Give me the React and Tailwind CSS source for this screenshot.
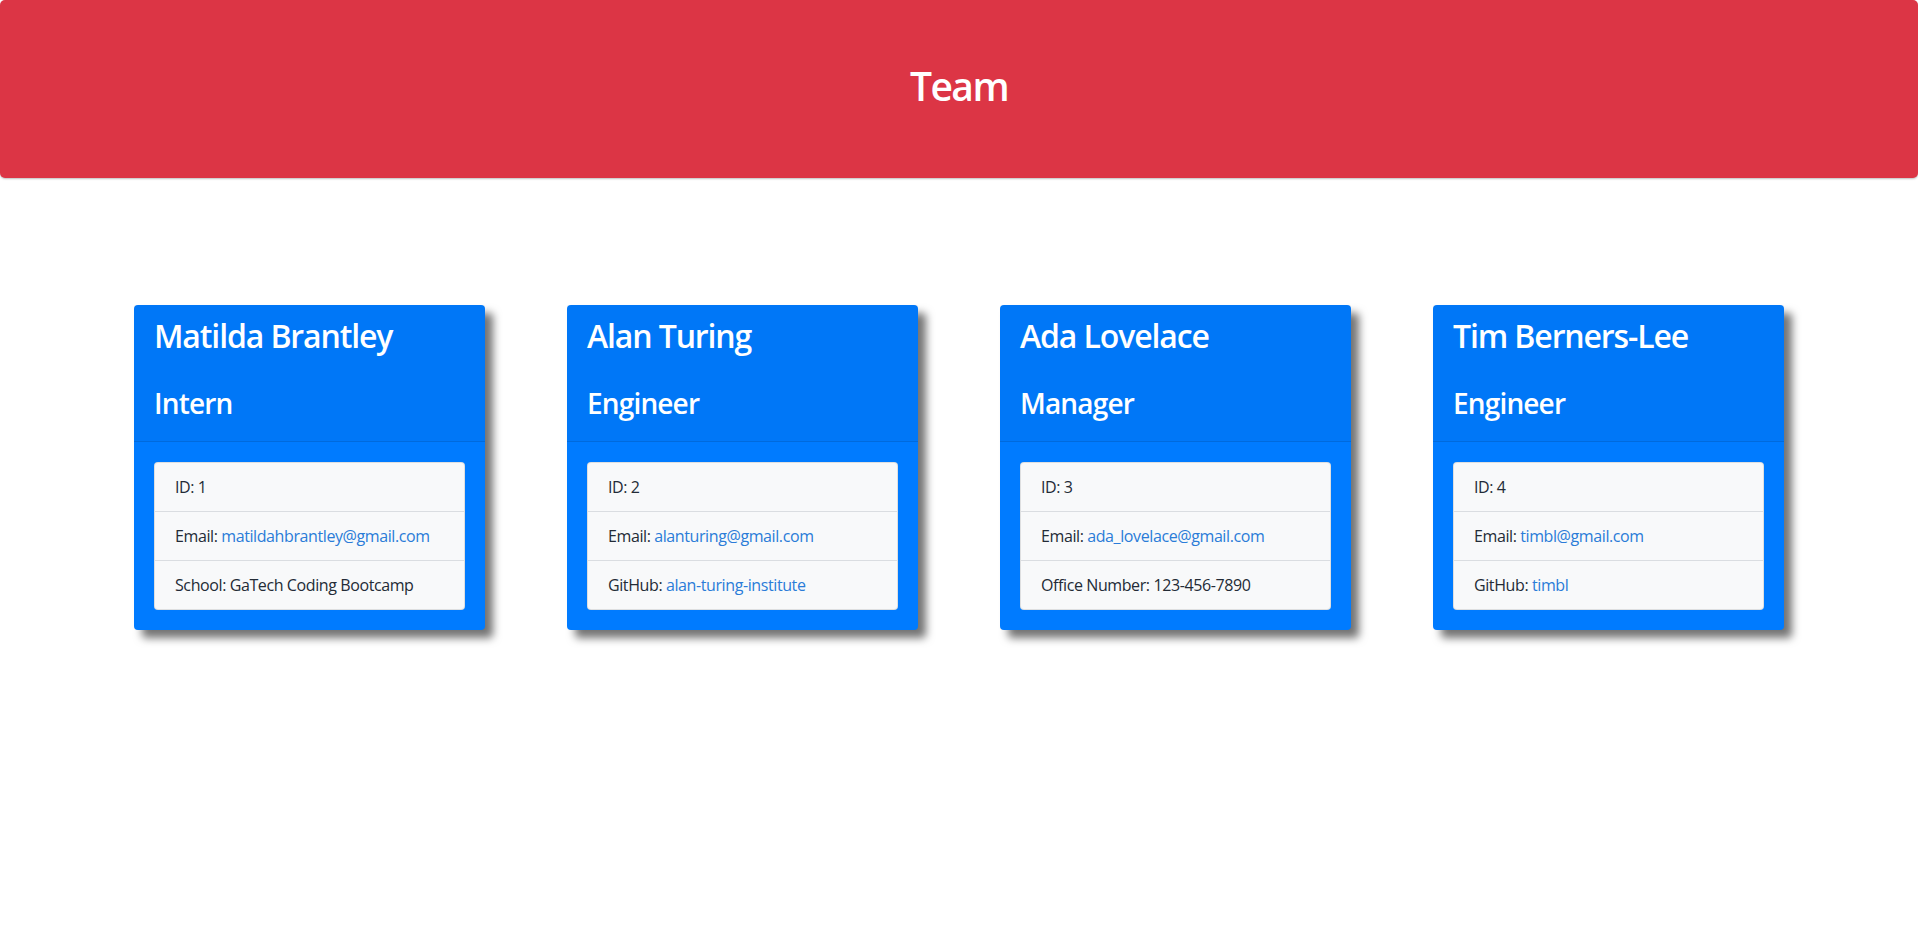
import React from 'react';

const team = [
  { name: 'Matilda Brantley', role: 'Intern', id: 1, email: 'matildahbrantley@gmail.com', extraLabel: 'School', extra: 'GaTech Coding Bootcamp' },
  { name: 'Alan Turing', role: 'Engineer', id: 2, email: 'alanturing@gmail.com', extraLabel: 'GitHub', extra: 'alan-turing-institute', link: true },
  { name: 'Ada Lovelace', role: 'Manager', id: 3, email: 'ada_lovelace@gmail.com', extraLabel: 'Office Number', extra: '123-456-7890' },
  { name: 'Tim Berners-Lee', role: 'Engineer', id: 4, email: 'timbl@gmail.com', extraLabel: 'GitHub', extra: 'timbl', link: true },
];

const EmployeeCard = ({ person }) => {
  return (
    <div className="w-[351px] flex-shrink-0 rounded-[4px] bg-[#007bff] text-white shadow-[8px_8px_9px_rgba(0,0,0,0.55)]">
      {/* cabecera con nombre y rol */}
      <div className="border-b border-black/10 bg-black/[0.03] px-5 pt-3 pb-3">
        <h2 className="mb-2 text-[32px] leading-[38.4px] font-semibold tracking-[-0.035em]">{person.name}</h2>
        <h3 className="mt-8 mb-2 text-[28px] leading-[33.6px] font-semibold tracking-[-0.03em]">{person.role}</h3>
      </div>
      <div className="p-5">
        <ul className="overflow-hidden rounded-[4px] border border-black/10 bg-[#f8f9fa] text-[16px] leading-6 tracking-[-0.025em] text-[#232b36]">
          <li className="border-b border-[#dadde1] px-5 py-3">ID: {person.id}</li>
          <li className="border-b border-[#dadde1] px-5 py-3">
            Email: <a href={`mailto:${person.email}`} className="text-[#2a7cd8]">{person.email}</a>
          </li>
          <li className="px-5 py-3">
            {person.extraLabel}:{' '}
            {person.link ? (
              <a href={`https://github.com/${person.extra}`} className="text-[#2a7cd8]">{person.extra}</a>
            ) : (
              person.extra
            )}
          </li>
        </ul>
      </div>
    </div>
  );
};

export default function App() {
  return (
    <div className="min-h-screen bg-white font-['Open_Sans',sans-serif]">
      <header className="h-[178px] rounded-[5px] bg-[#dc3545] pt-[62px] text-center text-white shadow-[0_1px_2px_rgba(0,0,0,0.25)]">
        <h1 className="text-[39px] leading-[48px] font-semibold tracking-[-0.04em]">Team</h1>
      </header>
      <main className="mt-[127px] flex justify-center gap-[82px]">
        {team.map((person) => (
          <EmployeeCard key={person.id} person={person} />
        ))}
      </main>
    </div>
  );
}
